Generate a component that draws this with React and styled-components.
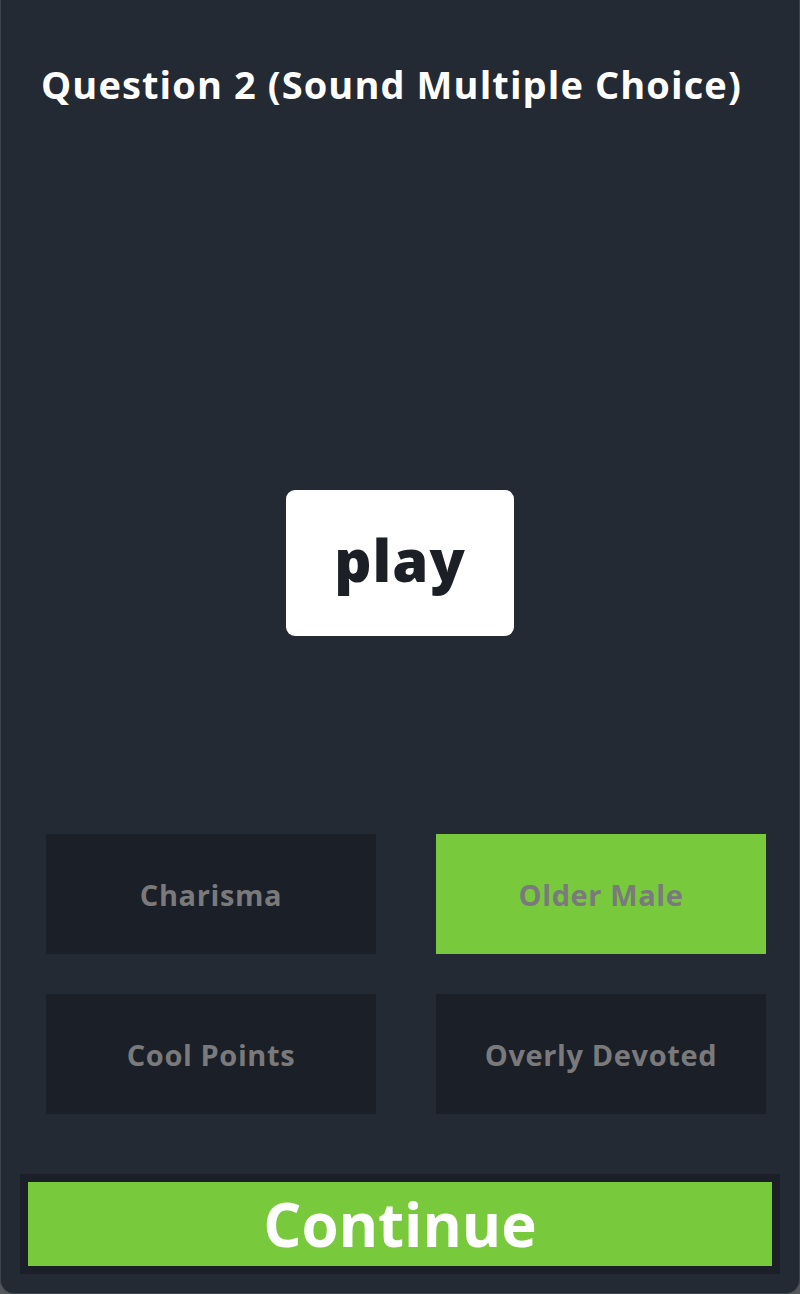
import React, { useState } from "react";
import styled, { createGlobalStyle } from "styled-components";

const Global = createGlobalStyle`
  html, body { margin: 0; padding: 0; background: #55595e; }
  * { box-sizing: border-box; }
`;

const Frame = styled.div`
  width: 800px;
  min-height: 1294px;
  background: #242a33;
  border: 1px solid #3f454d;
  border-top: none;
  border-radius: 0 0 14px 14px;
  display: flex;
  flex-direction: column;
  padding: 0 19px 19px;
  font-family: "Open Sans", "Noto Sans", sans-serif;
`;

const Title = styled.h1`
  margin: 0;
  padding: 62px 0 0 21px;
  font-size: 38px;
  line-height: 44px;
  font-weight: 700;
  letter-spacing: 1.1px;
  color: #ffffff;
  white-space: nowrap;
`;

const PlayRow = styled.div`
  display: flex;
  justify-content: center;
  margin-top: 384px;
`;

const PlayButton = styled.button`
  width: 228px;
  height: 146px;
  border: none;
  border-radius: 9px;
  background: #ffffff;
  color: #1c1f26;
  font-family: "Open Sans", "Noto Sans", sans-serif;
  font-weight: 800;
  font-size: 58px;
  letter-spacing: 1px;
  padding: 0 0 8px;
  cursor: pointer;
`;

const Grid = styled.div`
  display: grid;
  grid-template-columns: 330px 330px;
  column-gap: 60px;
  row-gap: 40px;
  margin: 198px 0 0 26px;
`;

const Choice = styled.button`
  height: 120px;
  border: none;
  background: ${(p) => (p.$selected ? "#79c93c" : "#1b1f27")};
  color: #7a7a7c;
  font-family: "Open Sans", "Noto Sans", sans-serif;
  font-weight: 700;
  font-size: 29px;
  letter-spacing: 0.6px;
  padding: 0;
  cursor: pointer;
`;

const ContinueFrame = styled.div`
  margin-top: 60px;
  border: 8px solid #1b1f27;
  background: #1b1f27;
`;

const ContinueButton = styled.button`
  display: block;
  width: 100%;
  height: 84px;
  border: none;
  background: #79c93c;
  color: #ffffff;
  font-family: "Open Sans", "Noto Sans", sans-serif;
  font-weight: 700;
  font-size: 60px;
  line-height: 84px;
  padding: 0;
  cursor: pointer;
`;

const choices = ["Charisma", "Older Male", "Cool Points", "Overly Devoted"];

export default function App() {
  const [selected, setSelected] = useState(1);
  return (
    <>
      <Global />
      <Frame>
        <Title>Question 2 (Sound Multiple Choice)</Title>
        <PlayRow>
          <PlayButton>play</PlayButton>
        </PlayRow>
        <Grid>
          {choices.map((c, i) => (
            <Choice key={c} $selected={i === selected} onClick={() => setSelected(i)}>
              {c}
            </Choice>
          ))}
        </Grid>
        <ContinueFrame>
          <ContinueButton>Continue</ContinueButton>
        </ContinueFrame>
      </Frame>
    </>
  );
}
